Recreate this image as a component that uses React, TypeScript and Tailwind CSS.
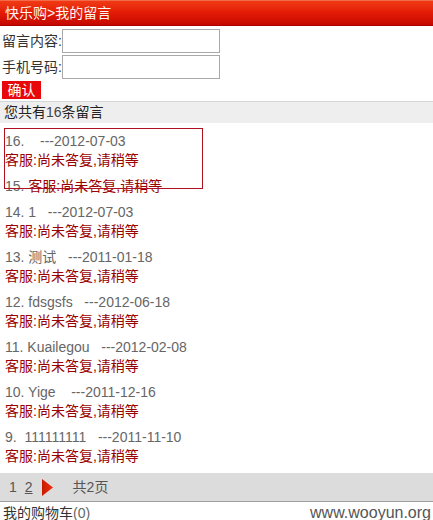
const items = [
  { n: 16, title: "", date: "2012-07-03" },
  { n: 15, broken: true },
  { n: 14, title: "1", date: "2012-07-03" },
  { n: 13, title: "测试", date: "2011-01-18" },
  { n: 12, title: "fdsgsfs", date: "2012-06-18" },
  { n: 11, title: "Kuailegou", date: "2012-02-08" },
  { n: 10, title: "Yige ", date: "2011-12-16" },
  { n: 9, title: " 111111111", date: "2011-11-10" },
]

const App = () => {
  return (
    <div
      className="relative w-[433px] h-[520px] overflow-hidden bg-white text-[14px] text-[#333]"
      style={{ fontFamily: '"Liberation Sans", Arial, "Noto Sans CJK SC", sans-serif' }}
    >
      {/* Header */}
      <div className="h-[26px] flex items-center px-[5px] bg-gradient-to-b from-[#f03a14] via-[#e21a06] to-[#c40800] border-t border-[#f26a4a] border-b border-b-[#b00000] text-[#fff4f0] text-[14px] leading-none">
        快乐购&gt;我的留言
      </div>

      {/* Form */}
      <div className="pl-[2px] pt-[3px]">
        <div className="flex items-center h-[24px]">
          <span className="w-[60px] whitespace-nowrap">留言内容:</span>
          <input className="w-[158px] h-[24px] border border-[#a9a9a9] bg-white outline-none" />
        </div>
        <div className="flex items-center h-[24px] mt-[2px]">
          <span className="w-[60px] whitespace-nowrap">手机号码:</span>
          <input className="w-[158px] h-[24px] border border-[#a9a9a9] bg-white outline-none" />
        </div>
        <button className="mt-[2px] h-[18px] w-[39px] bg-[#e8080a] text-white text-[14px] leading-none flex items-center justify-center">
          确认
        </button>
      </div>

      {/* Count bar */}
      <div className="mt-[2px] h-[22px] flex items-center px-[4px] bg-[#eeeeee] border-t border-[#d6d6d6] text-[#222]">
        您共有<span className="text-[#444]">16</span>条留言
      </div>

      {/* Messages */}
      <div className="pt-[9px] px-[5px] leading-[19px]">
        {items.map((it) =>
          it.broken ? (
            <div key={it.n} className="mb-[7px] whitespace-pre">
              <span className="text-[#666]">{it.n}. </span>
              <span className="text-[#990000]">客服:尚未答复,请稍等</span>
            </div>
          ) : (
            <div key={it.n} className="mb-[7px]">
              <div className="text-[#666] whitespace-pre">
                {`${it.n}. ${it.title}   ---${it.date}`}
              </div>
              <div className="text-[#990000]">客服:尚未答复,请稍等</div>
            </div>
          )
        )}
      </div>

      {/* Pagination */}
      <div className="h-[29px] flex items-center pl-[9px] bg-[#dcdcdc] border-b border-[#a0a0a0] text-[#555]">
        <span>1</span>
        <span className="ml-[8px] underline">2</span>
        <svg width="11" height="17" viewBox="0 0 11 17" className="ml-[9px]">
          <defs>
            <linearGradient id="tri" x1="0" y1="0" x2="1" y2="0">
              <stop offset="0" stopColor="#c81a00" />
              <stop offset="1" stopColor="#f03010" />
            </linearGradient>
          </defs>
          <path d="M0 0 L11 8.5 L0 17 Z" fill="url(#tri)" />
        </svg>
        <span className="ml-[20px]">共2页</span>
      </div>

      {/* Footer */}
      <div className="flex items-center justify-between pl-[3px] pr-[2px] h-[22px]">
        <span className="text-[#333]">
          我的购物车<span className="text-[#666]">(0)</span>
        </span>
        <span className="text-[16px] text-[#555]">www.wooyun.org</span>
      </div>

      {/* Annotation box */}
      <div className="absolute left-[4px] top-[128px] w-[199px] h-[61px] border border-[#b01020] pointer-events-none" />
    </div>
  )
}

export default App
